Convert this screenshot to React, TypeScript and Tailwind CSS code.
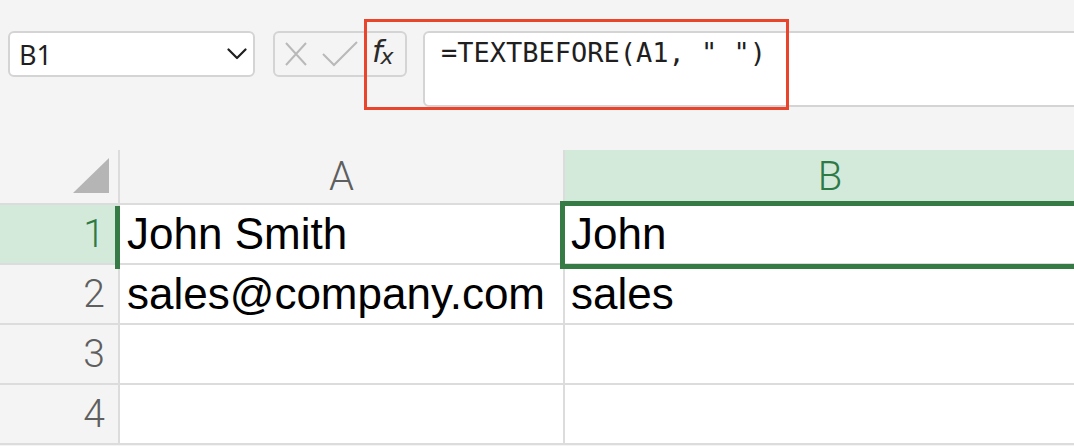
import React from 'react';

const rows = [
  { n: '1', a: 'John Smith', b: 'John', active: true },
  { n: '2', a: 'sales@company.com', b: 'sales' },
  { n: '3', a: '', b: '' },
  { n: '4', a: '', b: '' },
];

function Chevron() {
  return (
    <svg width="20" height="12" viewBox="0 0 20 12" fill="none">
      <path d="M1.5 1.5 L10 10 L18.5 1.5" stroke="#1f1f1f" strokeWidth="2.2" strokeLinecap="round" strokeLinejoin="round" />
    </svg>
  );
}

export default function App() {
  return (
    <div className="relative w-[1074px] h-[446px] overflow-hidden bg-[#f4f4f4] font-['Noto_Sans',sans-serif]">
      {/* formula bar */}
      <div className="flex items-start h-[150px] pt-[31px] pl-2">
        <div className="flex items-center justify-between w-[247px] h-[46px] rounded-[6px] border-2 border-[#d4d4d4] bg-white pl-[9px] pr-[6px]">
          <span className="text-[27px] leading-none text-[#1f1f1f]">B1</span>
          <Chevron />
        </div>
        <div className="ml-[18px] flex items-center w-[134px] h-[46px] rounded-[6px] border-2 border-[#d4d4d4] pl-[9px]">
          <svg width="24" height="26" viewBox="0 0 24 26" fill="none">
            <path d="M2 2 L22 24 M22 2 L2 24" stroke="#b9b9b9" strokeWidth="2" />
          </svg>
          <svg className="ml-[14px]" width="36" height="26" viewBox="0 0 36 26" fill="none">
            <path d="M1 13 L12 24 L35 1" stroke="#b9b9b9" strokeWidth="2" />
          </svg>
          <span className="ml-[14px] flex items-baseline -translate-y-[2px] text-[#2a2a2a] font-['DejaVu_Sans',sans-serif]">
            <span className="italic text-[30px] leading-none font-light">f</span>
            <span className="italic text-[22px] leading-none -ml-[2px] translate-y-[2px]">x</span>
          </span>
        </div>
        <div className="ml-[16px] flex-1 -mr-[20px] h-[76px] rounded-[6px] border-2 border-[#d4d4d4] bg-white pl-[16px] pt-[2px]">
          <span className="text-[27px] leading-[36px] text-[#1f1f1f] font-['DejaVu_Sans_Mono',monospace]">=TEXTBEFORE(A1, " ")</span>
        </div>
      </div>

      {/* red annotation */}
      <div className="absolute left-[364px] top-[19px] w-[425px] h-[91px] border-[3px] border-[#e8452c]" />

      {/* grid */}
      <div className="relative grid grid-cols-[120px_445px_540px] grid-rows-[55px_60px_60px_60px_60px]">
        <div className="relative border-r-2 border-b-2 border-[#dcdcdc] bg-[#f4f4f4]">
          <svg className="absolute left-0 top-0" width="118" height="53" viewBox="0 0 118 53">
            <polygon points="109,8 109,43 73,43" fill="#b5b5b5" />
          </svg>
        </div>
        <div className="flex items-center justify-center border-r-2 border-b-2 border-[#dcdcdc] bg-[#f4f4f4] text-[40px] font-light text-[#5f5f5f] font-['Roboto',sans-serif]">
          A
        </div>
        <div className="flex items-center justify-center border-b-2 border-[#dcdcdc] bg-[#d3eadb] text-[40px] font-light text-[#2e7a46] font-['Roboto',sans-serif] pr-[10px]">
          B
        </div>

        {rows.map((r) => (
          <React.Fragment key={r.n}>
            <div
              className={
                r.active
                  ? 'flex items-center justify-end pr-[13px] border-r-2 border-b-2 border-[#dcdcdc] bg-[#d3eadb] text-[39px] font-light text-[#2e7a46] font-[\'Roboto\',sans-serif]'
                  : 'flex items-center justify-end pr-[13px] border-r-2 border-b-2 border-[#dcdcdc] bg-[#f4f4f4] text-[39px] font-light text-[#5f5f5f] font-[\'Roboto\',sans-serif]'
              }
            >
              {r.n}
            </div>
            <div className="flex items-center pl-[7px] border-r-2 border-b-2 border-[#dcdcdc] bg-white text-[44px] text-black font-['Liberation_Sans',sans-serif] whitespace-nowrap">
              {r.a}
            </div>
            <div className="flex items-center pl-[6px] border-b-2 border-[#dcdcdc] bg-white text-[44px] text-black font-['Liberation_Sans',sans-serif] whitespace-nowrap">
              {r.b}
            </div>
          </React.Fragment>
        ))}

        {/* active row marker and selected cell */}
        <div className="absolute left-[115px] top-[56px] w-[5px] h-[63px] bg-[#367b46]" />
        <div className="absolute left-[560px] top-[51px] w-[560px] h-[68px] border-[5px] border-[#367b46]" />
      </div>
    </div>
  );
}
